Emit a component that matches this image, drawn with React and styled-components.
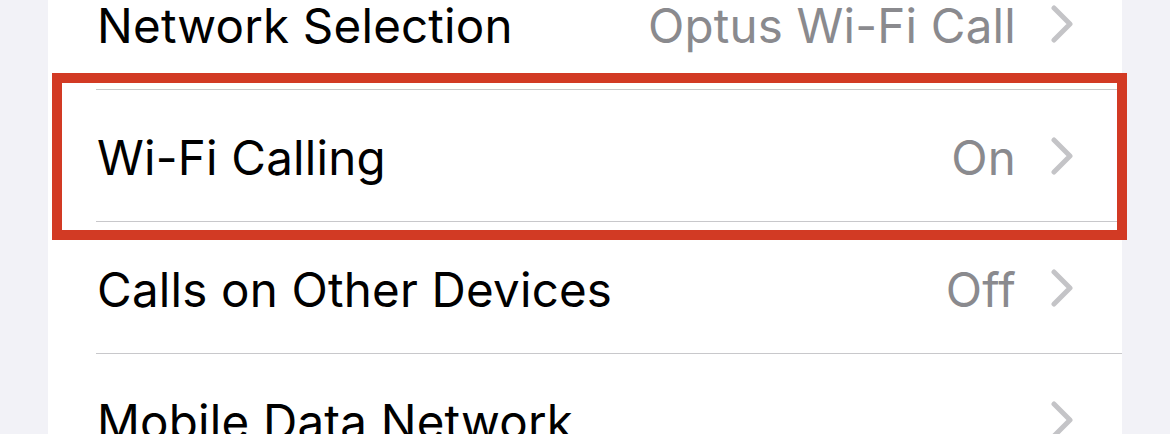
import React from "react";
import styled, { createGlobalStyle } from "styled-components";

const GlobalStyle = createGlobalStyle`
  html, body {
    margin: 0;
    padding: 0;
    background: #f2f2f7;
    overflow: hidden;
  }
  body {
    font-family: Inter, "Noto Sans", "Liberation Sans", sans-serif;
  }
`;

const rows = [
  { label: "Network Selection", value: "Optus Wi-Fi Call" },
  { label: "Wi-Fi Calling", value: "On", highlight: true },
  { label: "Calls on Other Devices", value: "Off" },
  { label: "Mobile Data Network", value: "" },
];

const Chevron = () => (
  <svg width="24" height="38" viewBox="0 0 24 38" fill="none">
    <polyline
      points="4,3 20,19 4,35"
      stroke="#c4c4c7"
      strokeWidth="5"
      strokeLinecap="round"
      strokeLinejoin="round"
    />
  </svg>
);

const App = () => {
  return (
    <>
      <GlobalStyle />
      <Page>
        <Card>
          {rows.map((r) => (
            <Row key={r.label}>
              <RowInner>
                <Label>{r.label}</Label>
                <Value>{r.value}</Value>
                <Chevron />
              </RowInner>
              {r.highlight && <Highlight />}
            </Row>
          ))}
        </Card>
      </Page>
    </>
  );
};

export default App;

const Page = styled.div`
  width: 1170px;
  height: 434px;
  overflow: hidden;
`;

const Card = styled.div`
  margin: -42px 0 0 48px;
  width: 1074px;
  background: #ffffff;
`;

const Row = styled.div`
  position: relative;
  padding-left: 48px;
`;

const RowInner = styled.div`
  display: flex;
  align-items: center;
  height: 131px;
  padding-right: 48px;
  border-bottom: 1.5px solid #c8c8cb;
`;

const Label = styled.span`
  flex: 1;
  font-size: 47.5px;
  color: #000000;
  letter-spacing: 0.2px;
  padding: 4px 0 0 1px;
`;

const Value = styled.span`
  font-size: 47.5px;
  color: #8a8a8e;
  margin-right: 34px;
  letter-spacing: 0.2px;
  padding-top: 4px;
`;

const Highlight = styled.div`
  position: absolute;
  top: -17px;
  bottom: -18px;
  left: 4px;
  right: -5px;
  border: 10px solid #d23a24;
  pointer-events: none;
`;
